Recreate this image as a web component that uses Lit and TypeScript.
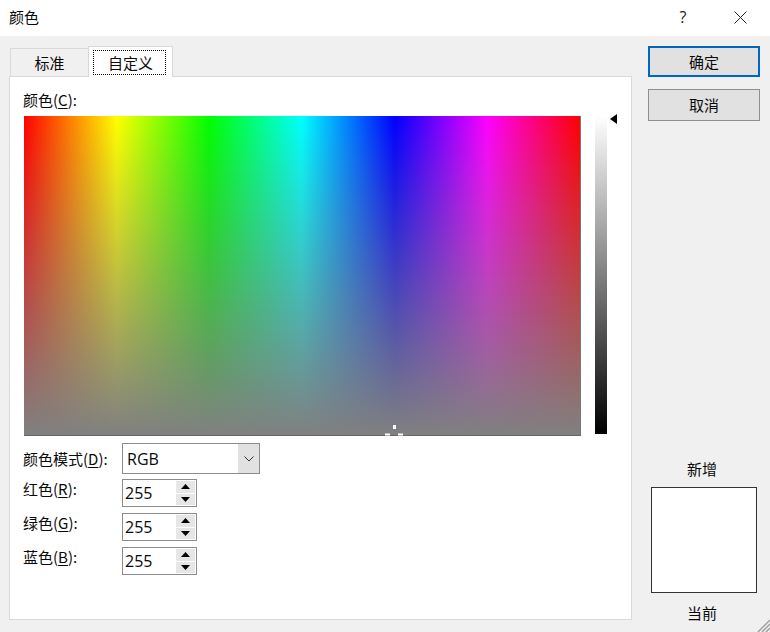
import { LitElement, html, css, svg } from "lit";
import { customElement } from "lit/decorators.js";

const rows = [
  { zh: "红色", key: "R" },
  { zh: "绿色", key: "G" },
  { zh: "蓝色", key: "B" },
];

@customElement("app-root")
export class AppRoot extends LitElement {
  static styles = css`
    :host {
      display: flex;
      flex-direction: column;
      width: 770px;
      height: 632px;
      background: #f0f0f0;
      color: #0a0a0a;
      font-family: "Open Sans", "Noto Sans CJK SC", sans-serif;
      font-size: 16px;
      overflow: hidden;
      position: relative;
    }
    .cjk { font-family: "Noto Sans CJK SC", sans-serif; font-size: 15px; }
    u { text-underline-offset: 2px; text-decoration-thickness: 1px; }
    .titlebar {
      height: 36px;
      background: #fff;
      display: flex;
      align-items: center;
      padding-left: 9px;
      flex: none;
    }
    .title { flex: 1; margin-top: -4px; }
    .help { width: 46px; text-align: center; font-size: 16px; color: #222; margin-right: 11px; margin-top: -2px; }
    .close { width: 46px; height: 36px; display: flex; align-items: center; justify-content: center; margin-right: 7px; margin-top: -2px; }
    .main { display: flex; flex: 1; padding: 10px 10px 12px 9px; gap: 16px; min-height: 0; }
    .left { width: 623px; flex: none; display: flex; flex-direction: column; }
    .tabs { display: flex; align-items: flex-end; height: 31px; padding-left: 1px; flex: none; position: relative; z-index: 1; }
    .tab { display: flex; align-items: center; justify-content: center; box-sizing: border-box; }
    .tab.off { width: 78px; height: 28px; border: 1px solid #d9d9d9; border-width: 1px 0 0 1px; margin-bottom: 1px; }
    .tab.on { width: 85px; height: 31px; background: #fff; border: 1px solid #d9d9d9; border-bottom: none; }
    .focus { width: 73px; height: 25px; border: 1px dotted #000; display: flex; align-items: center; justify-content: center; box-sizing: border-box; margin: 1px 2px 0 0; padding-left: 2px; }
    .panel { flex: 1; margin-top: -1px; background: #fff; border: 1px solid #d9d9d9; box-sizing: border-box; padding: 13px 0 0 14px; }
    .heading { height: 26px; line-height: 20px; margin-left: -1px; }
    .picker { display: flex; gap: 14px; align-items: flex-start; }
    .field {
      width: 557px; height: 320px; position: relative; box-sizing: border-box;
      border-right: 1px solid #777; border-bottom: 1px solid #666;
      background:
        linear-gradient(to bottom, rgba(128,128,128,0), #808080),
        linear-gradient(to right, #f00 0%, #ff0 16.667%, #0f0 33.333%, #0ff 50%, #00f 66.667%, #f0f 83.333%, #f00 100%);
    }
    .cross { position: absolute; left: 360px; top: 308px; }
    .lum { width: 12px; height: 318px; background: linear-gradient(to bottom, #fff, #000); position: relative; }
    .marker { position: absolute; left: 15px; top: -2px; }
    .form { display: grid; grid-template-columns: 99px auto; grid-template-rows: 33px 34px 34px 34px; margin: 7px 0 0 -1px; align-items: center; justify-items: start; }
    .form .first { height: 31px; align-self: start; display: flex; align-items: center; }
    .form .lab { margin-top: -10px; }
    .combo { width: 138px; height: 31px; border: 1px solid #8c8c8c; box-sizing: border-box; display: flex; align-self: start; }
    .combo .val { flex: 1; padding-left: 4px; line-height: 30px; }
    .combo .arrow { width: 21px; background: #e1e1e1; display: flex; align-items: center; justify-content: center; }
    .spin { width: 75px; height: 28px; border: 1px solid #8c8c8c; box-sizing: border-box; display: flex; align-items: center; padding: 1px 1px 1px 2px; }
    .spin .val { flex: 1; line-height: 24px; }
    .btns { width: 19px; height: 24px; display: flex; flex-direction: column; gap: 1px; }
    .btns div { flex: 1; background: #e6e6e6; display: flex; align-items: center; justify-content: center; }
    .right { width: 112px; flex: none; display: flex; flex-direction: column; margin-bottom: -3px; }
    .btn { height: 31px; box-sizing: border-box; background: #e1e1e1; display: flex; align-items: center; justify-content: center; }
    .btn.primary { border: 2px solid #0067c0; }
    .btn.plain { border: 1px solid #8f8f8f; margin-top: 12px; height: 32px; padding-bottom: 2px; }
    .spacer { flex: 1; }
    .cap { text-align: center; height: 20px; line-height: 20px; padding-right: 4px; }
    .swatch { width: 106px; height: 106px; border: 1px solid #333; background: #fff; box-sizing: border-box; margin: 8px 0 10px 3px; }
    .grip { position: absolute; right: 0; bottom: 0; display: block; }
  `;

  private up() {
    return svg`<svg width="9" height="5" viewBox="0 0 9 5"><path d="M4.5 0L9 5H0z" fill="#000"/></svg>`;
  }
  private down() {
    return svg`<svg width="9" height="5" viewBox="0 0 9 5"><path d="M0 0H9L4.5 5z" fill="#000"/></svg>`;
  }

  render() {
    return html`
      <div class="titlebar">
        <div class="title cjk">颜色</div>
        <div class="help">?</div>
        <div class="close">
          <svg width="13" height="13" viewBox="0 0 13 13"><path d="M.5.5l12 12M12.5.5l-12 12" stroke="#222" stroke-width="1" fill="none"/></svg>
        </div>
      </div>
      <div class="main">
        <div class="left">
          <div class="tabs">
            <div class="tab off cjk">标准</div>
            <div class="tab on cjk"><div class="focus">自定义</div></div>
          </div>
          <div class="panel">
            <div class="heading"><span class="cjk">颜色(<u>C</u>):</span></div>
            <div class="picker">
              <div class="field">
                <svg class="cross" width="20" height="12" viewBox="0 0 20 12">
                  <path d="M9 1h3v4H9zM1 9.500h5v2H1zM14 9.500h5v2h-5z" fill="#fff"/>
                </svg>
              </div>
              <div class="lum">
                <svg class="marker" width="8" height="10" viewBox="0 0 8 10"><path d="M7 0V10L0 5z" fill="#000"/></svg>
              </div>
            </div>
            <div class="form">
              <div class="first cjk">颜色模式(<u>D</u>):</div>
              <div class="combo">
                <div class="val">RGB</div>
                <div class="arrow">
                  <svg width="10" height="6" viewBox="0 0 10 6"><path d="M.5.500L5 5l4.500-4.500" stroke="#333" fill="none"/></svg>
                </div>
              </div>
              ${rows.map(
                (r) => html`
                  <div class="lab cjk">${r.zh}(<u>${r.key}</u>):</div>
                  <div class="spin">
                    <div class="val">255</div>
                    <div class="btns">
                      <div>${this.up()}</div>
                      <div>${this.down()}</div>
                    </div>
                  </div>
                `
              )}
            </div>
          </div>
        </div>
        <div class="right">
          <div class="btn primary cjk">确定</div>
          <div class="btn plain cjk">取消</div>
          <div class="spacer"></div>
          <div class="cap cjk">新增</div>
          <div class="swatch"></div>
          <div class="cap cjk">当前</div>
        </div>
      </div>
      <svg class="grip" width="13" height="13" viewBox="0 0 13 13">
        <path d="M13 1L1 13M13 5L5 13M13 9L9 13" stroke="#a0a0a0" stroke-width="1.500" fill="none"/>
      </svg>
    `;
  }
}
